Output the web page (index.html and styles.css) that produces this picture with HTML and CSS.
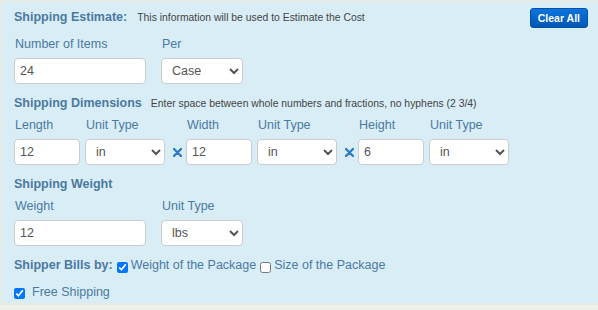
FILE: index.html
```html
<!DOCTYPE html>
<html>
    <head>
        <meta charset="utf-8">
        <title>Shipping Estimate</title>
        <link rel="stylesheet" href="styles.css">
    </head>
    <body>
        <div class="panel">

            <div class="panel-head">
                <h2>Shipping Estimate:</h2>
                <span class="note note-first">This information will be used to Estimate the Cost</span>
                <button class="btn-clear">Clear All</button>
            </div>

            <div class="fields first">
                <div class="field">
                    <span class="field-label">Number of Items</span>
                    <input class="box wide" type="text" value="24">
                </div>
                <div class="field">
                    <span class="field-label">Per</span>
                    <select class="box unit"><option>Case</option><option>Each</option></select>
                </div>
            </div>

            <div class="section-head">
                <h2>Shipping Dimensions</h2>
                <span class="note">Enter space between whole numbers and fractions, no hyphens (2 3/4)</span>
            </div>

            <div class="fields dims">
                <div class="field pair">
                    <span class="field-label">Length</span>
                    <input class="box small" type="text" value="12">
                </div>
                <div class="field">
                    <span class="field-label">Unit Type</span>
                    <select class="box dim-unit"><option>in</option><option>cm</option></select>
                </div>
                <div class="times">
                    <svg width="9" height="9" viewBox="0 0 9 9"><path d="M1 1 L8 8 M8 1 L1 8" stroke="#2f7bc4" stroke-width="2.4" stroke-linecap="round"/></svg>
                </div>
                <div class="field pair">
                    <span class="field-label">Width</span>
                    <input class="box small" type="text" value="12">
                </div>
                <div class="field">
                    <span class="field-label">Unit Type</span>
                    <select class="box dim-unit"><option>in</option><option>cm</option></select>
                </div>
                <div class="times">
                    <svg width="9" height="9" viewBox="0 0 9 9"><path d="M1 1 L8 8 M8 1 L1 8" stroke="#2f7bc4" stroke-width="2.4" stroke-linecap="round"/></svg>
                </div>
                <div class="field pair">
                    <span class="field-label">Height</span>
                    <input class="box small" type="text" value="6">
                </div>
                <div class="field">
                    <span class="field-label">Unit Type</span>
                    <select class="box dim-unit"><option>in</option><option>cm</option></select>
                </div>
            </div>

            <div class="section-head">
                <h2>Shipping Weight</h2>
            </div>

            <div class="fields">
                <div class="field">
                    <span class="field-label">Weight</span>
                    <input class="box wide" type="text" value="12">
                </div>
                <div class="field">
                    <span class="field-label">Unit Type</span>
                    <select class="box unit"><option>lbs</option><option>kg</option></select>
                </div>
            </div>

            <div class="bills">
                <h2>Shipper Bills by:</h2>
                <label class="check"><input type="checkbox" checked>Weight of the Package</label>
                <label class="check"><input type="checkbox">Size of the Package</label>
            </div>

            <div class="free">
                <label class="check"><input type="checkbox" checked>Free Shipping</label>
            </div>

        </div>
    </body>
</html>
```

FILE: styles.css
```css
body {
    margin: 0;
    font-family: "Liberation Sans", Arial, sans-serif;
    font-size: 12.5px;
    color: #4b7aa1;
    background-color: #eef1ea;
}

h2 {
    margin: 0;
    font-size: 12.5px;
    line-height: 18px;
    font-weight: bold;
}

.panel {
    background-color: #d9edf7;
    border: 2px solid #e6ece4;
    border-right: 0;
    padding: 6px 10px 2px 12px;
}

/* heading rows */
.panel-head,
.section-head {
    display: flex;
    align-items: baseline;
}

.section-head {
    margin-top: 10px;
}

.note {
    margin-left: 9px;
    font-size: 10.4px;
    color: #444;
}

.note-first {
    margin-left: 10px;
}

.btn-clear {
    margin-left: auto;
    align-self: flex-start;
    height: 20px;
    padding: 0 7px;
    font-family: "Liberation Sans", Arial, sans-serif;
    font-size: 10.5px;
    font-weight: bold;
    color: #fff;
    background: linear-gradient(#0c74dc, #0057b5);
    border: 1px solid #0052a8;
    border-radius: 3px;
}

/* label + input rows */
.fields {
    display: flex;
    margin-top: 4px;
}

.fields.first {
    margin-top: 7px;
}

.field {
    display: flex;
    flex-direction: column;
    margin-right: 15px;
}

.dims .field {
    margin-right: 0;
}

.dims .field.pair {
    margin-right: 5px;
}

.field-label {
    line-height: 18px;
    padding-left: 1px;
    margin-bottom: 5px;
}

.box {
    box-sizing: border-box;
    height: 26px;
    margin: 0;
    border: 1px solid #ccc;
    border-radius: 4px;
    background-color: #fff;
    font-family: "Liberation Sans", Arial, sans-serif;
    font-size: 12.5px;
    color: #555;
    padding: 0 5px;
}

select.box {
    padding: 0 4px 0 6px;
}

.wide { width: 132px; }
.unit { width: 82px; }
.small { width: 66px; }
.dim-unit { width: 80px; }

.times {
    align-self: flex-end;
    height: 26px;
    display: flex;
    align-items: center;
    margin: 0 4px 0 8px;
}

/* checkboxes */
.bills,
.free {
    display: flex;
    align-items: flex-start;
    line-height: 18px;
}

.bills {
    margin-top: 10px;
}

.free {
    margin-top: 9px;
}

.check {
    display: flex;
    align-items: flex-start;
}

.check input {
    width: 11px;
    height: 11px;
    margin: 6px 3px 0 4px;
}

.free .check input {
    margin: 5px 7px 0 0;
}
```
